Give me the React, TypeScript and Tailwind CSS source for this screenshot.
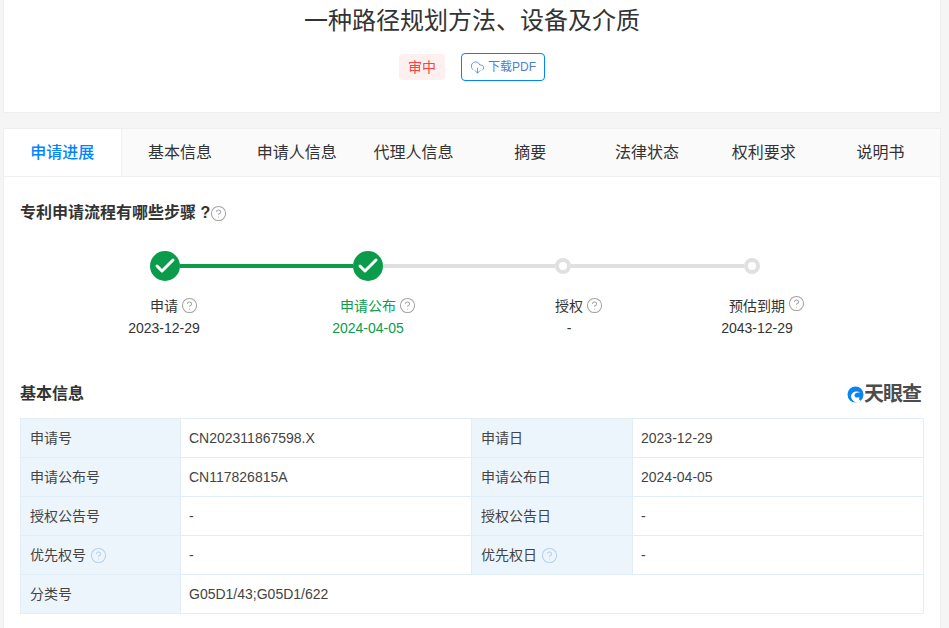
import { Check, CircleHelp, CloudDownload } from "lucide-react";

const font = { fontFamily: '"Liberation Sans", "Noto Sans CJK SC", sans-serif' };

const tabs = ["申请进展", "基本信息", "申请人信息", "代理人信息", "摘要", "法律状态", "权利要求", "说明书"];

function Done() {
  return (
    <div className="flex h-7.5 w-7.5 flex-none items-center justify-center rounded-full bg-[#0a9c4a]">
      <Check size={24} strokeWidth={3} className="text-white" />
    </div>
  );
}

function Pending() {
  return <div className="h-4 w-4 flex-none rounded-full border-4 border-[#e0e0e0] bg-white" />;
}

function Step({ label, date, green, raised, cls }: { label: string; date: string; green?: boolean; raised?: boolean; cls: string }) {
  return (
    <div className={`flex w-40 flex-none flex-col items-center text-sm leading-[22px] ${cls} ${green ? "text-[#0a9c4a]" : "text-[#333333]"}`}>
      <span className="relative">
        {label}
        <CircleHelp
          size={17}
          strokeWidth={1.5}
          className={`absolute left-full ml-0.75 text-[#a3a3a3] ${raised ? "top-0" : "top-0.5"}`}
        />
      </span>
      <span>{date}</span>
    </div>
  );
}

function Label({ text, help }: { text: string; help?: boolean }) {
  return (
    <div className="flex h-full items-center gap-1 border-r border-[#e1edf7] bg-[#edf5fc] px-2.25 text-[#444444]">
      {text}
      {help && <CircleHelp size={17} strokeWidth={1.5} className="text-[#b5d0e8]" />}
    </div>
  );
}

function Value({ text, border }: { text: string; border?: boolean }) {
  return (
    <div className={`flex h-full items-center px-2 text-[#444444] ${border ? "border-r border-[#e1edf7]" : ""}`}>{text}</div>
  );
}

function Row({ a, b, c, d, help }: { a: string; b: string; c: string; d: string; help?: boolean }) {
  return (
    <div className="grid h-9.75 grid-cols-[160px_291px_161px_1fr] border-b border-[#e1edf7]">
      <Label text={a} help={help} />
      <Value text={b} border />
      <Label text={c} help={help} />
      <Value text={d} />
    </div>
  );
}

export default function App() {
  return (
    <div style={font} className="h-[628px] overflow-hidden bg-[#f5f5f5] pl-0.75 pr-2">
      <div className="flex h-[113px] flex-col items-center border-x border-b border-[#eeeeee] bg-white">
        <h1 className="mt-1.25 text-2xl leading-8 text-[#333333]">一种路径规划方法、设备及介质</h1>
        <div className="mt-4 flex items-center gap-4">
          <span className="flex h-6.5 w-11.5 items-center justify-center rounded-sm bg-[#fff0f0] text-sm text-[#ff4040]">审中</span>
          <button className="flex h-7 items-center gap-0.75 rounded-sm border border-[#0084ff] px-2 text-xs text-[#4a7fd6]">
            <CloudDownload size={15} strokeWidth={1.25} />
            下载PDF
          </button>
        </div>
      </div>

      <div className="mt-3.75 h-[520px] border-x border-t border-[#eeeeee] bg-white">
        <div className="flex h-12 border-b border-[#f0f0f0] bg-[#fafafa] pr-px">
          {tabs.map((t, i) => (
            <div
              key={t}
              className={`flex flex-1 items-center justify-center text-base ${
                i === 0 ? "border-r border-[#f0f0f0] bg-white font-medium text-[#0084ff]" : "text-[#333333]"
              }`}
            >
              {t}
            </div>
          ))}
        </div>

        <div className="px-4">
          <div className="mt-6 flex h-6 items-center">
            <h2 className="text-base font-bold text-[#333333]">专利申请流程有哪些步骤 ?</h2>
            <CircleHelp size={17} strokeWidth={1.5} className="text-[#a3a3a3]" />
          </div>

          <div className="mt-6.5 ml-32.5 flex w-[610px] items-center">
            <Done />
            <div className="h-1 flex-1 bg-[#0a9c4a]" />
            <Done />
            <div className="h-1 flex-1 bg-[#e0e0e0]" />
            <Pending />
            <div className="h-1 flex-1 bg-[#e0e0e0]" />
            <Pending />
          </div>

          <div className="mt-3.5 flex">
            <Step label="申请" date="2023-12-29" cls="ml-16" />
            <Step label="申请公布" date="2024-04-05" green cls="ml-11" />
            <Step label="授权" date="-" cls="ml-10.25" />
            <Step label="预估到期" date="2043-12-29" raised cls="ml-7" />
          </div>

          <div className="mt-10.75 flex h-6 items-center justify-between">
            <h2 className="text-base font-semibold text-[#333333]">基本信息</h2>
            <div className="mr-0.75 flex items-center">
              <svg width="17" height="17" viewBox="0.5 0.5 17 17">
                <circle cx="9" cy="9" r="8" fill="#0a84f0" />
                <path d="M4.5 10.5C5 6.5 10 4.5 14 7.5C11 6.5 8.5 7.5 8 9.5C7.6 11.5 10 13 13 11.5C11.5 15 14 15.5 15 14L12 17H9C6 15 4.5 13 4.5 10.5Z" fill="#ffffff" />
              </svg>
              <span className="text-xl leading-6 font-semibold tracking-tighter text-[#4d4d4d]">天眼查</span>
            </div>
          </div>

          <div className="mt-3 border-x border-t border-[#e1edf7] text-sm">
            <Row a="申请号" b="CN202311867598.X" c="申请日" d="2023-12-29" />
            <Row a="申请公布号" b="CN117826815A" c="申请公布日" d="2024-04-05" />
            <Row a="授权公告号" b="-" c="授权公告日" d="-" />
            <Row a="优先权号" b="-" c="优先权日" d="-" help />
            <div className="grid h-9.75 grid-cols-[160px_1fr] border-b border-[#e1edf7]">
              <Label text="分类号" />
              <Value text="G05D1/43;G05D1/622" />
            </div>
          </div>
        </div>
      </div>
    </div>
  );
}
